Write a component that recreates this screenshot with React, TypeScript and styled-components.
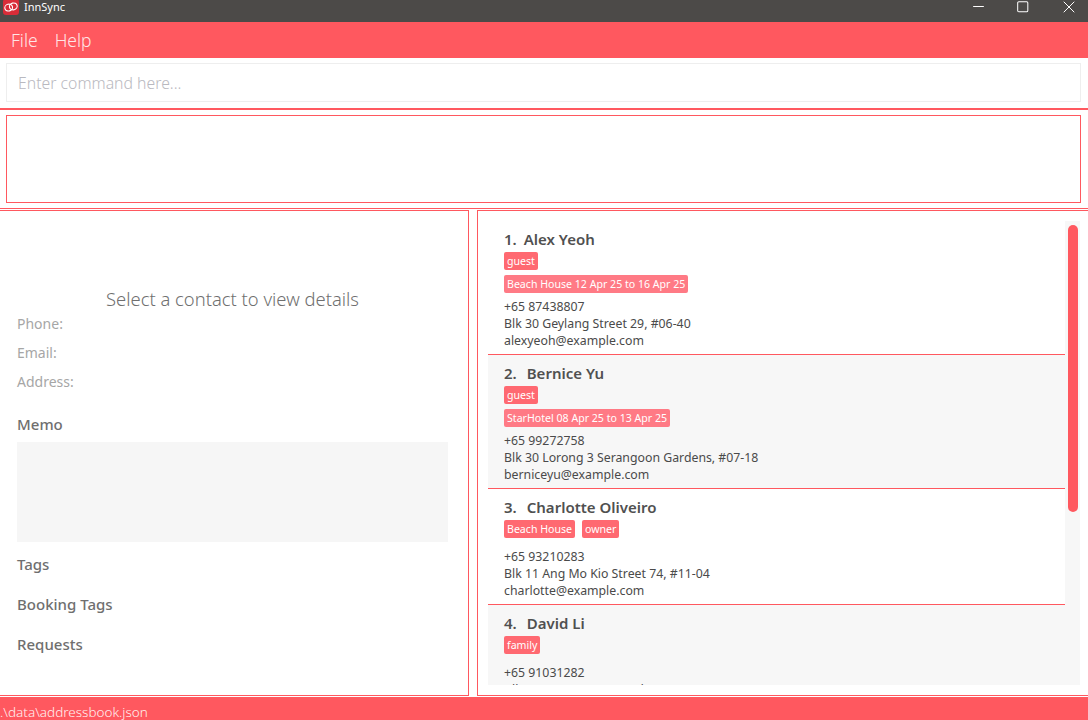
import styled, { createGlobalStyle } from 'styled-components';
import { Minus, Square, X } from 'lucide-react';

const RED = '#ff585f';

type Person = {
  index: number;
  name: string;
  tags: string[];
  booking?: string;
  phone: string;
  address: string;
  email: string;
};

const people: Person[] = [
  {
    index: 1,
    name: 'Alex Yeoh',
    tags: ['guest'],
    booking: 'Beach House 12 Apr 25 to 16 Apr 25',
    phone: '+65 87438807',
    address: 'Blk 30 Geylang Street 29, #06-40',
    email: 'alexyeoh@example.com',
  },
  {
    index: 2,
    name: 'Bernice Yu',
    tags: ['guest'],
    booking: 'StarHotel 08 Apr 25 to 13 Apr 25',
    phone: '+65 99272758',
    address: 'Blk 30 Lorong 3 Serangoon Gardens, #07-18',
    email: 'berniceyu@example.com',
  },
  {
    index: 3,
    name: 'Charlotte Oliveiro',
    tags: ['Beach House', 'owner'],
    phone: '+65 93210283',
    address: 'Blk 11 Ang Mo Kio Street 74, #11-04',
    email: 'charlotte@example.com',
  },
  {
    index: 4,
    name: 'David Li',
    tags: ['family'],
    phone: '+65 91031282',
    address: 'Blk 436 Serangoon Gardens Street 26, #16-43',
    email: 'lidavid@example.com',
  },
];

const App = () => {
  return (
    <Window>
      <GlobalStyle />
      <TitleBar>
        <AppTitle>
          <Logo viewBox="0 0 16 16">
            <rect width="16" height="16" rx="3" fill="#d92c38" />
            <g transform="rotate(-15 8 8)">
              <ellipse cx="5.6" cy="8" rx="3.9" ry="3.4" fill="none" stroke="#fff" strokeWidth="1.1" />
              <ellipse cx="10.4" cy="8" rx="3.9" ry="3.4" fill="none" stroke="#fff" strokeWidth="1.1" />
            </g>
          </Logo>
          InnSync
        </AppTitle>
        <WindowButtons>
          <Minus size={17} strokeWidth={1.4} />
          <Square size={13.5} strokeWidth={1.8} />
          <X size={20} strokeWidth={1.2} />
        </WindowButtons>
      </TitleBar>

      <MenuBar>
        <MenuItem>File</MenuItem>
        <MenuItem>Help</MenuItem>
      </MenuBar>

      <CommandArea>
        <CommandBox>Enter command here...</CommandBox>
      </CommandArea>

      <ResultArea>
        <ResultBox />
      </ResultArea>

      <Panels>
        <DetailPanel>
          <Prompt>Select a contact to view details</Prompt>
          <FieldLabel>Phone:</FieldLabel>
          <FieldLabel>Email:</FieldLabel>
          <FieldLabel>Address:</FieldLabel>
          <MemoTitle>Memo</MemoTitle>
          <MemoBox />
          <SectionTitle>Tags</SectionTitle>
          <SectionTitle>Booking Tags</SectionTitle>
          <SectionTitle>Requests</SectionTitle>
        </DetailPanel>

        <ListPanel>
          <ListScroll>
            {people.map((p) => (
              <Card key={p.index} $odd={p.index % 2 === 1}>
                <Name $narrow={p.index === 1}>
                  <span>{p.index}.</span>
                  {p.name}
                </Name>
                <TagRow>
                  {p.tags.map((t) => (
                    <Tag key={t}>{t}</Tag>
                  ))}
                </TagRow>
                {p.booking && <BookingTag>{p.booking}</BookingTag>}
                <Details $spaced={!p.booking}>
                  <Line>{p.phone}</Line>
                  <Line>{p.address}</Line>
                  <Line>{p.email}</Line>
                </Details>
              </Card>
            ))}
          </ListScroll>
          <Track>
            <Thumb />
          </Track>
        </ListPanel>
      </Panels>

      <StatusBar>.\data\addressbook.json</StatusBar>
    </Window>
  );
};

const GlobalStyle = createGlobalStyle`
  html, body {
    margin: 0;
    padding: 0;
    background: #fff;
    overflow: hidden;
  }
  * {
    box-sizing: border-box;
  }
`;

const Window = styled.div`
  width: 1088px;
  height: 720px;
  display: flex;
  flex-direction: column;
  font-family: 'Noto Sans', 'Open Sans', sans-serif;
  overflow: hidden;
`;

const TitleBar = styled.div`
  height: 22px;
  flex: none;
  padding-bottom: 9px;
  background: #4c4a48;
  color: #fff;
  display: flex;
  align-items: center;
  justify-content: space-between;
  overflow: hidden;
`;

const AppTitle = styled.div`
  display: flex;
  align-items: center;
  gap: 5px;
  padding-left: 3px;
  font-size: 11px;
`;

const Logo = styled.svg`
  width: 16px;
  height: 16px;
`;

const WindowButtons = styled.div`
  display: flex;
  align-items: center;
  gap: 29.5px;
  padding-right: 9px;
  color: #fff;
`;

const MenuBar = styled.div`
  height: 36px;
  flex: none;
  background: ${RED};
  display: flex;
  align-items: center;
  gap: 17px;
  padding-left: 11px;
`;

const MenuItem = styled.div`
  color: #fff;
  font-size: 17.5px;
  font-weight: 300;
  opacity: 0.85;
`;

const CommandArea = styled.div`
  height: 52px;
  flex: none;
  padding: 5px 7px 5px 6px;
  border-bottom: 2px solid ${RED};
`;

const CommandBox = styled.div`
  height: 39px;
  border: 1px solid #eee;
  padding-left: 11px;
  display: flex;
  align-items: center;
  color: #b9b9c0;
  font-size: 15.8px;
  font-weight: 300;
`;

const ResultArea = styled.div`
  height: 99px;
  flex: none;
  padding: 5px 7px 5px 6px;
  border-bottom: 1px solid ${RED};
`;

const ResultBox = styled.div`
  height: 88px;
  border: 1px solid ${RED};
`;

const Panels = styled.div`
  flex: 1;
  min-height: 0;
  display: flex;
  gap: 8px;
  padding: 1px 0;
`;

const DetailPanel = styled.div`
  width: 469px;
  flex: none;
  border: 1px solid ${RED};
  border-left: none;
  padding: 78px 20px 0 17px;
  color: #6f6f6f;
`;

const Prompt = styled.div`
  text-align: center;
  font-size: 18.4px;
  line-height: 20px;
  font-weight: 300;
`;

const FieldLabel = styled.div`
  height: 29px;
  font-size: 14px;
  line-height: 29px;
  color: #a6a6a6;
`;

const MemoTitle = styled.div`
  font-size: 15px;
  font-weight: 500;
  line-height: 22px;
  margin-top: 17px;
`;

const MemoBox = styled.div`
  height: 100px;
  background: #f6f6f6;
  margin: 7px 0 11px;
`;

const SectionTitle = styled.div`
  font-size: 15px;
  font-weight: 500;
  line-height: 22px;
  margin-bottom: 18px;
`;

const ListPanel = styled.div`
  position: relative;
  flex: 1;
  min-width: 0;
  border: 1px solid ${RED};
  border-right: none;
  padding: 10px 8px 10px 10px;
  overflow: hidden;
`;

const ListScroll = styled.div`
  height: 100%;
  background: #f7f7f7;
  overflow: hidden;
  padding-right: 15px;
`;

const Card = styled.div<{ $odd: boolean }>`
  background: ${({ $odd }) => ($odd ? '#fff' : '#f7f7f7')};
  padding: 8px 16px 5px 16px;
  border-bottom: 1px solid ${RED};
  color: #4a4a4a;
`;

const Name = styled.div<{ $narrow: boolean }>`
  font-size: 15px;
  font-weight: 600;
  line-height: 20px;
  color: #505050;

  span {
    margin-right: ${({ $narrow }) => ($narrow ? '7px' : '10px')};
  }
`;

const TagRow = styled.div`
  display: flex;
  gap: 7px;
  margin-top: 3px;
  min-height: 18px;
`;

const Tag = styled.div`
  height: 18px;
  padding: 0 3px;
  background: #ff6971;
  border-radius: 2px;
  color: #fff;
  font-size: 10.6px;
  line-height: 18px;
`;

const BookingTag = styled.div`
  width: fit-content;
  height: 18px;
  padding: 0 3px;
  margin-top: 5px;
  background: #ff7a85;
  border-radius: 2px;
  color: #fff;
  font-size: 10.6px;
  line-height: 18px;
`;

const Details = styled.div<{ $spaced: boolean }>`
  margin-top: ${({ $spaced }) => ($spaced ? '10px' : '5px')};
`;

const Line = styled.div`
  font-size: 12.3px;
  line-height: 17px;
`;

const Track = styled.div`
  position: absolute;
  top: 10px;
  right: 8px;
  bottom: 10px;
  width: 15px;
  padding: 4px 2px 0 3px;
`;

const Thumb = styled.div`
  height: 287px;
  background: ${RED};
  border-radius: 5px;
`;

const StatusBar = styled.div`
  height: 23px;
  flex: none;
  padding-top: 5px;
  background: ${RED};
  color: #fff0f0;
  font-size: 13.5px;
  font-weight: 300;
  line-height: 20px;
  white-space: nowrap;
  overflow: hidden;
`;

export default App;
